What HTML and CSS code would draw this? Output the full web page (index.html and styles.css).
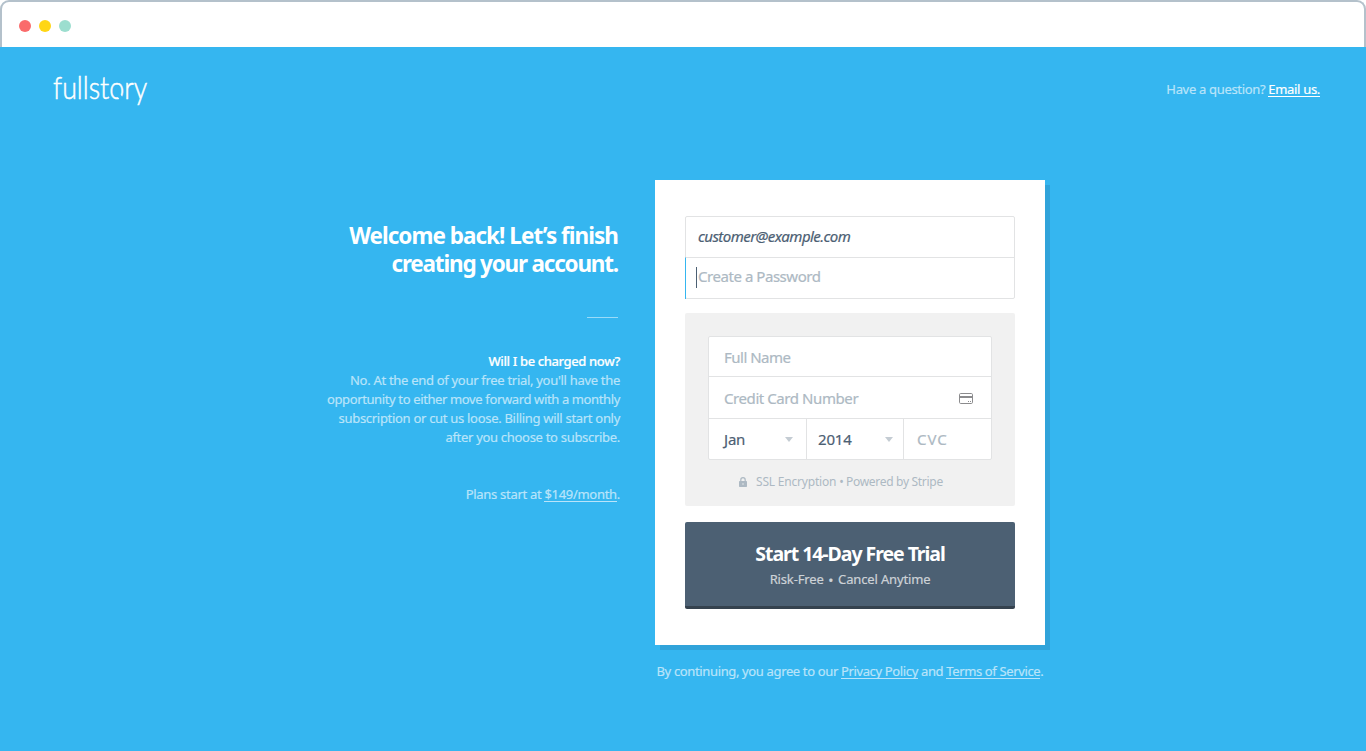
FILE: index.html
```html
<!DOCTYPE html>
<html lang="en">
<head>
<meta charset="utf-8">
<title>FullStory</title>
<link rel="stylesheet" href="styles.css">
</head>
<body>
<div class="window-bar"><i class="dot dot-red"></i><i class="dot dot-yellow"></i><i class="dot dot-green"></i></div>
<div class="page">
  <header class="header">
    <div class="logo">fullst<span class="logo-o">o</span>ry</div>
    <div class="question">Have a question? <a class="email" href="#">Email us.</a></div>
  </header>
  <main class="main">
    <section class="intro">
      <h1 class="title"><span class="title-line">Welcome back! Let’s finish</span><span class="title-line title-end">creating your account.</span></h1>
      <div class="rule"></div>
      <div class="faq"><strong class="faq-q">Will I be charged now?</strong><br><span class="faq-loose">No. At the end of your free trial, you'll have the</span><br>opportunity to either move forward with a monthly<br><span class="faq-loose">subscription or cut us loose. Billing will start only</span><br><span class="faq-loose">after you choose to subscribe.</span></div>
      <div class="plans">Plans start at <a class="price" href="#">$149/month</a>.</div>
    </section>
    <section class="signup">
      <form class="card">
        <div class="account">
          <div class="field email-field">customer@example.com</div>
          <div class="field password-field"><span class="caret"></span>Create a Password</div>
        </div>
        <div class="billing">
          <div class="billing-fields">
            <div class="bill name">Full Name</div>
            <div class="bill number">Credit Card Number
              <svg class="card-icon" width="14" height="11" viewBox="0 0 14 11"><rect x=".5" y=".5" width="13" height="10" rx="1.2" fill="none" stroke="#8b8b8d"/><path d="M1 3h12v2H1z" fill="#8b8b8d"/><path d="M9 8h1v1H9zM11 8h1v1h-1z" fill="#8b8b8d"/></svg>
            </div>
            <div class="bill-row">
              <div class="bill month">Jan<i class="arrow"></i></div>
              <div class="bill year">2014<i class="arrow"></i></div>
              <div class="bill cvc">CVC</div>
            </div>
          </div>
          <div class="secure"><svg class="lock" width="8" height="10" viewBox="0 0 8 10"><path d="M1.8 5V2.9a2.2 2.2 0 0 1 4.4 0V5" fill="none" stroke="#adb9c3" stroke-width="1.2"/><rect y="4" width="8" height="6" rx=".7" fill="#adb9c3"/><path d="M3.5 6h1v2h-1z" fill="#dfe3e6"/></svg><span class="ssl">SSL Encryption</span><span class="bullet">•</span><span class="stripe">Powered by Stripe</span></div>
        </div>
        <button class="start" type="button"><span class="start-title">Start 14-Day Free Trial</span><span class="start-note">Risk-Free <b class="start-dot">•</b> Cancel Anytime</span></button>
      </form>
      <div class="legal">By continuing, you agree to our <a class="legal-link" href="#">Privacy Policy</a> and <a class="legal-link" href="#">Terms of Service</a>.</div>
    </section>
  </main>
</div>
</body>
</html>
```
FILE: styles.css
```css
* { box-sizing: border-box; }
body { margin: 0; height: 751px; overflow: hidden; background: #35b6f0; font-family: "Noto Sans", sans-serif; font-size: 13px; line-height: 19px; color: #b9e4fa; -webkit-text-stroke: .2px currentColor; }
a { color: inherit; text-decoration: none; border-bottom: 1px solid currentColor; }
.window-bar { height: 47px; background: #fff; border: 2px solid #b4c1cb; border-bottom: 0; border-radius: 9px 9px 0 0; display: flex; gap: 8px; padding: 18px 17px; box-shadow: 0 -9px 0 9px #fff; clip-path: inset(0); }
.dot { width: 12px; height: 12px; border-radius: 50%; }
.dot-red { background: #fa6b6b; }
.dot-yellow { background: #ffd614; }
.dot-green { background: #9cdecf; }
.page { height: 704px; }
.header { display: flex; justify-content: space-between; height: 133px; padding: 20px 46px 0 53px; }
.logo { font-family: Lato, sans-serif; font-weight: 300; font-size: 31px; line-height: 40px; color: #fff; -webkit-text-stroke: .5px #fff; font-variant-ligatures: none; transform: scaleX(.865); transform-origin: left; }
.logo-o { position: relative; }
.logo-o::after { content: ""; position: absolute; right: 2px; bottom: 6px; width: 4px; height: 5px; background: #35b6f0; transform: rotate(-40deg); }
.question { padding-top: 13px; letter-spacing: -.32px; }
.email { color: #fff; line-height: 14px; display: inline-block; height: 15px; }
.main { display: grid; grid-template-columns: 620px 390px; gap: 35px; }
.intro { text-align: right; padding-top: 42px; letter-spacing: -.37px; }
.title { margin: 0; padding-right: 2px; color: #fff; font-size: 22.5px; line-height: 28px; height: 57px; font-weight: 700; letter-spacing: -.97px; -webkit-text-stroke: 0; }
.title-line { display: block; line-height: 28px; }
.title-end { letter-spacing: -1.2px; }
.rule { width: 31px; height: 1px; background: #9adbf8; margin: 38px 2px 34px auto; }
.faq-q { color: #fff; font-weight: 500; }
.faq-loose { letter-spacing: -.3px; }
.plans { margin-top: 38px; letter-spacing: -.3px; }
.price, .legal-link { display: inline-block; line-height: 14px; height: 15px; }
.card { height: 465px; margin: 0; background: #fff; box-shadow: 5px 5px 0 #30a3da; padding: 36px 30px; }
.account { border: 1px solid #e2e3e4; border-radius: 2px; height: 83px; font-size: 15px; }
.field { height: 40px; line-height: 39px; padding-left: 12px; color: #4c6073; letter-spacing: -.45px; }
.email-field { font-style: italic; letter-spacing: -.55px; }
.password-field { height: 42px; line-height: 37px; border-top: 1px solid #e2e3e4; border-left: 1px solid #35b6f0; margin-left: -1px; position: relative; color: #adb9c3; }
.caret { position: absolute; left: 10px; top: 9px; width: 1px; height: 21px; background: #4c6073; }
.billing { margin-top: 14px; height: 193px; background: #f1f1f1; border-radius: 2px; padding: 23px; }
.billing-fields { height: 124px; border: 1px solid #e2e3e4; border-radius: 2px; background: #fff; font-size: 15px; }
.bill { line-height: 41px; color: #adb9c3; letter-spacing: -.2px; }
.name { height: 40px; padding-left: 15px; border-bottom: 1px solid #e2e3e4; letter-spacing: -.5px; }
.number { height: 42px; padding: 2px 18px 0 15px; border-bottom: 1px solid #e2e3e4; display: flex; align-items: center; justify-content: space-between; letter-spacing: -.42px; }
.bill-row { display: grid; grid-template-columns: 98px 97px 1fr; height: 40px; }
.month, .year { color: #4c6073; border-right: 1px solid #e2e3e4; display: flex; align-items: center; justify-content: space-between; }
.month { padding: 0 13px 0 15px; }
.year { padding: 0 10px 0 11px; }
.cvc { padding-left: 13px; letter-spacing: .9px; }
.arrow { border: 4px solid transparent; border-top: 5px solid #c4ccd3; border-bottom: 0; }
.secure { display: flex; align-items: center; height: 19px; margin-top: 12px; padding-left: 31px; font-size: 12px; color: #adb9c3; -webkit-text-stroke: 0; }
.lock { margin: 1px 9px 0 0; }
.ssl { width: 81px; white-space: nowrap; letter-spacing: -.2px; }
.bullet { width: 9px; text-align: center; font-size: 12px; }
.stripe { letter-spacing: -.3px; white-space: nowrap; }
.start { display: flex; flex-direction: column; align-items: center; justify-content: flex-start; width: 100%; height: 87px; margin-top: 16px; padding: 17px 0 0; background: #4c6073; border: 0; border-bottom: 3px solid #35424e; border-radius: 2px; font-family: inherit; color: #fff; }
.start-title { font-size: 19.5px; line-height: 30px; height: 30px; font-weight: 700; letter-spacing: -1.05px; -webkit-text-stroke: 0; }
.start-note { font-size: 13px; line-height: 19px; color: #cdd2d7; margin-top: 1px; letter-spacing: -.15px; }
.start-dot { font-size: 11px; margin: 0 2px; }
.legal { margin-top: 17px; text-align: center; white-space: nowrap; letter-spacing: -.36px; }
```
